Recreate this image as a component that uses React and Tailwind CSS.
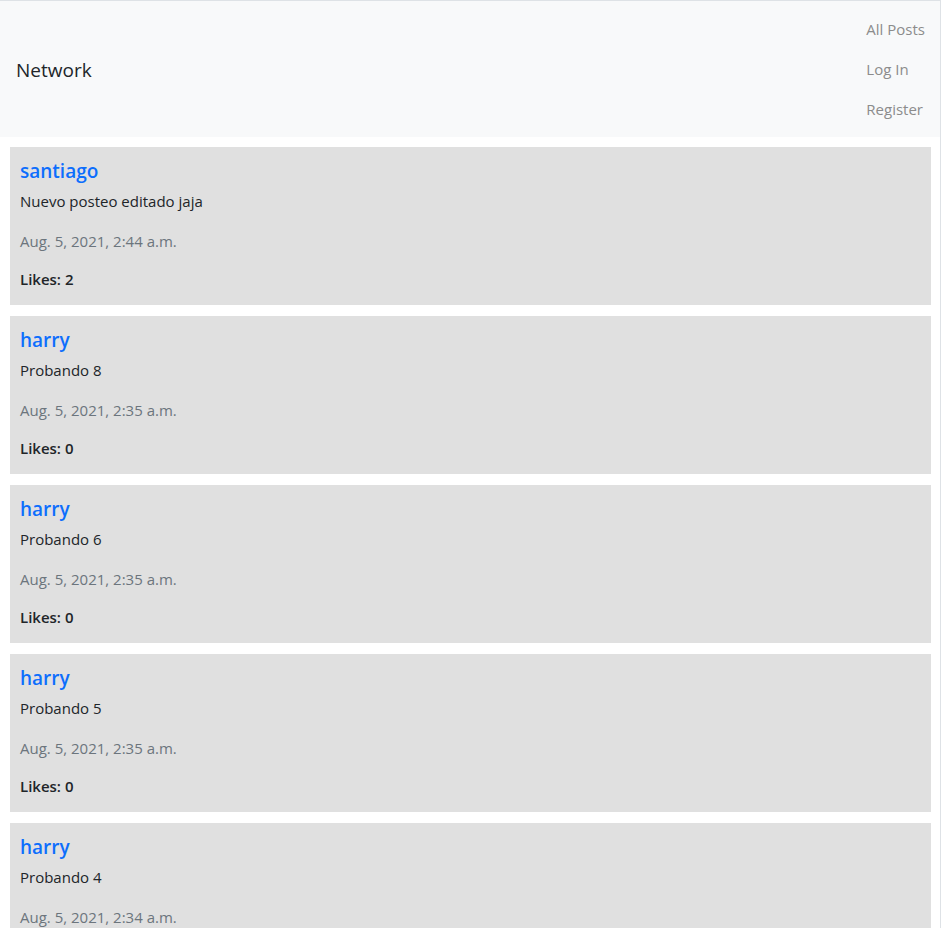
import React from "react";

const posts = [
  { user: "santiago", body: "Nuevo posteo editado jaja", date: "Aug. 5, 2021, 2:44 a.m.", likes: 2 },
  { user: "harry", body: "Probando 8", date: "Aug. 5, 2021, 2:35 a.m.", likes: 0 },
  { user: "harry", body: "Probando 6", date: "Aug. 5, 2021, 2:35 a.m.", likes: 0 },
  { user: "harry", body: "Probando 5", date: "Aug. 5, 2021, 2:35 a.m.", likes: 0 },
  { user: "harry", body: "Probando 4", date: "Aug. 5, 2021, 2:34 a.m.", likes: 0 },
];

const Navbar = () => (
  <nav className="flex items-center justify-between bg-[#f8f9fa] pl-4 pr-[15px] py-2 h-[136px]">
    <a className="text-[19px] leading-[30px] pt-[2px] text-[#212529]">Network</a>
    <ul className="flex flex-col items-start">
      {["All Posts", "Log In", "Register"].map((l) => (
        <li key={l}>
          <a className="block py-2 text-[15px] leading-6 text-[#8c8c8c]">{l}</a>
        </li>
      ))}
    </ul>
  </nav>
);

const Post = ({ post }) => (
  <div className="bg-[#e0e0e0] px-[10px] pt-[10px] pb-[14px]">
    <h5 className="text-[19px] leading-6 font-semibold text-[#0d6efd] pt-[2px] mb-[6px]">{post.user}</h5>
    <p className="text-[15px] leading-6 text-[#212529]">{post.body}</p>
    <p className="text-[15px] leading-6 text-[#6c757d] mt-4">{post.date}</p>
    <p className="text-[15px] leading-6 font-semibold text-[#212529] mt-[14px]">Likes: {post.likes}</p>
  </div>
);

export default function App() {
  return (
    <div className="w-[941px] h-[928px] overflow-hidden border-t border-r border-[#dee2e6] bg-white font-['Open_Sans',sans-serif]">
      <Navbar />
      <div className="flex flex-col gap-[11px] pl-[10px] pr-[9px] pt-[10px]">
        {posts.map((p, i) => (
          <Post key={i} post={p} />
        ))}
      </div>
    </div>
  );
}
